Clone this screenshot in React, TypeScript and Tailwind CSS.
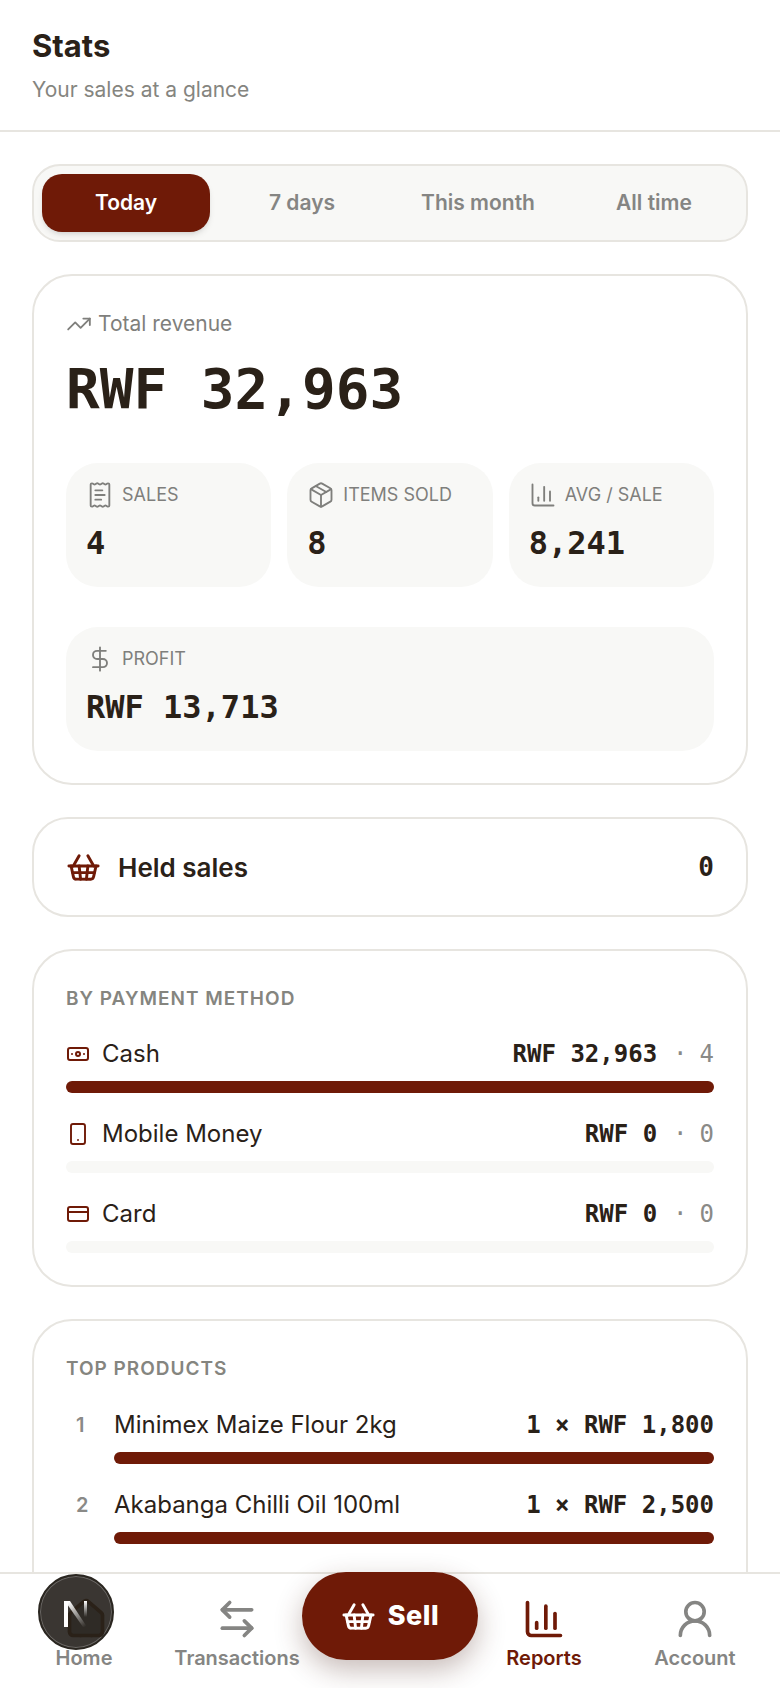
import { TrendingUp, ReceiptText, Package, ChartColumn, DollarSign, ShoppingBasket, Banknote, Smartphone, CreditCard, ArrowLeftRight, UserRound, House } from "lucide-react";
import type { ReactNode } from "react";

const sans = "font-['Inter','Liberation_Sans',sans-serif]";
const mono = "font-['DejaVu_Sans_Mono',monospace]";

function Tile({ icon, label, value, className }: { icon: ReactNode; label: string; value: string; className?: string }) {
  return (
    <div className={`h-[124px] rounded-[32px] bg-[#f8f8f6] pl-5 pt-[18px] ${className ?? ""}`}>
      <div className="flex items-center gap-2 text-[#7f7f7c]">
        <span className="flex h-7 w-7 items-center justify-center">{icon}</span>
        <span className="text-[18px] leading-6">{label}</span>
      </div>
      <div className={`mt-[14px] text-[32px] font-bold leading-10 text-[#2a2118] ${mono}`}>{value}</div>
    </div>
  );
}

function PayRow({ icon, name, amount, count, on }: { icon: ReactNode; name: string; amount: string; count: string; on?: boolean }) {
  return (
    <div>
      <div className="flex h-8 items-center">
        <span className="flex h-6 w-6 items-center justify-center text-[#6f1a07]">{icon}</span>
        <span className="ml-3 text-[24px] text-[#2a2118]">{name}</span>
        <span className={`ml-auto text-[24px] font-bold text-[#2a2118] ${mono}`}>{amount}</span>
        <span className={`ml-4 text-[24px] text-[#8a8a87] ${mono}`}>·</span>
        <span className={`ml-3 text-[24px] text-[#8a8a87] ${mono}`}>{count}</span>
      </div>
      <div className={`mt-[11px] h-3 rounded-full ${on ? "bg-[#6f1a07]" : "bg-[#f8f8f6]"}`} />
    </div>
  );
}

function ProductRow({ rank, name, qty }: { rank: string; name: string; qty: string }) {
  return (
    <div className="flex">
      <span className="w-12 pl-[10px] text-[20px] font-semibold leading-8 text-[#8a8a87]">{rank}</span>
      <div className="flex-1">
        <div className="flex h-8 items-center justify-between">
          <span className="text-[24px] text-[#2a2118]">{name}</span>
          <span className={`text-[24px] font-bold text-[#2a2118] ${mono}`}>{qty}</span>
        </div>
        <div className="mt-[11px] h-3 rounded-full bg-[#6f1a07]" />
      </div>
    </div>
  );
}

function NavItem({ icon, label, active, className }: { icon: ReactNode; label: string; active?: boolean; className?: string }) {
  return (
    <div className={`flex flex-col items-center ${active ? "text-[#6f1a07]" : "text-[#858583]"} ${className ?? ""}`}>
      <span className="flex h-11 items-center justify-center">{icon}</span>
      <span className="mt-[3px] text-[20px] font-semibold leading-7">{label}</span>
    </div>
  );
}

export default function App() {
  return (
    <div className={`flex h-[1688px] w-[780px] flex-col overflow-hidden bg-white ${sans}`}>
      <header className="h-[132px] shrink-0 border-b-2 border-[#e7e5e0] px-8 pt-[26px]">
        <h1 className="text-[31px] font-bold leading-[40px] text-[#2a2118]">Stats</h1>
        <p className="mt-2 text-[21px] leading-[32px] text-[#85857f]">Your sales at a glance</p>
      </header>

      <main className="flex min-h-0 flex-1 flex-col gap-8 overflow-hidden px-8 pt-8">
        <div className="flex h-[78px] shrink-0 items-center gap-2 rounded-[28px] border-2 border-[#e7e5e0] bg-[#f8f8f6] px-2">
          <div className="flex h-[58px] flex-1 items-center justify-center rounded-[20px] bg-[#6f1a07] text-[21px] font-semibold text-white shadow-md">Today</div>
          <div className="flex h-[58px] flex-1 items-center justify-center text-[21px] font-semibold text-[#858583]">7 days</div>
          <div className="flex h-[58px] flex-1 items-center justify-center text-[21px] font-semibold text-[#858583]">This month</div>
          <div className="flex h-[58px] flex-1 items-center justify-center text-[21px] font-semibold text-[#858583]">All time</div>
        </div>

        <section className="h-[511px] shrink-0 rounded-[40px] border-2 border-[#e7e5e0] px-8 pt-[32px]">
          <div className="flex items-center gap-[6px] text-[#7f7f7c]">
            <TrendingUp size={26} strokeWidth={1.7} />
            <span className="text-[21px] leading-8">Total revenue</span>
          </div>
          <div className={`mt-[14px] text-[56px] font-bold leading-[70px] text-[#2a2118] ${mono}`}>RWF 32,963</div>
          <div className="mt-[39px] grid grid-cols-3 gap-4">
            <Tile icon={<ReceiptText size={30} strokeWidth={1.6} />} label="SALES" value="4" />
            <Tile icon={<Package size={30} strokeWidth={1.6} />} label="ITEMS SOLD" value="8" />
            <Tile icon={<ChartColumn size={30} strokeWidth={1.6} />} label="AVG / SALE" value="8,241" />
          </div>
          <Tile className="mt-10" icon={<DollarSign size={30} strokeWidth={1.6} />} label="PROFIT" value="RWF 13,713" />
        </section>

        <section className="flex h-[100px] shrink-0 items-center rounded-[36px] border-2 border-[#e7e5e0] px-8">
          <ShoppingBasket size={35} strokeWidth={2} className="text-[#6f1a07]" />
          <span className="ml-[17px] text-[26px] font-semibold text-[#2a2118]">Held sales</span>
          <span className={`ml-auto text-[26px] font-bold text-[#2a2118] ${mono}`}>0</span>
        </section>

        <section className="h-[338px] shrink-0 rounded-[40px] border-2 border-[#e7e5e0] px-8 pt-[34px]">
          <div className="text-[19px] font-semibold leading-7 tracking-[1px] text-[#85857f]">BY PAYMENT METHOD</div>
          <div className="mt-[25px] flex flex-col gap-[25px]">
            <PayRow on icon={<Banknote size={26} strokeWidth={2} />} name="Cash" amount="RWF 32,963" count="4" />
            <PayRow icon={<Smartphone size={26} strokeWidth={1.9} />} name="Mobile Money" amount="RWF 0" count="0" />
            <PayRow icon={<CreditCard size={26} strokeWidth={2} />} name="Card" amount="RWF 0" count="0" />
          </div>
        </section>

        <section className="shrink-0 rounded-[40px] border-2 border-[#e7e5e0] px-8 pt-[34px] pb-16">
          <div className="text-[19px] font-semibold leading-7 tracking-[1px] text-[#85857f]">TOP PRODUCTS</div>
          <div className="mt-[26px] flex flex-col gap-[25px]">
            <ProductRow rank="1" name="Minimex Maize Flour 2kg" qty="1 × RWF 1,800" />
            <ProductRow rank="2" name="Akabanga Chilli Oil 100ml" qty="1 × RWF 2,500" />
          </div>
        </section>
      </main>

      <nav className="relative z-10 flex h-[116px] shrink-0 items-start border-t-2 border-[#e7e5e0] bg-white pt-[23px]">
        <NavItem className="w-[168px]" icon={<House size={44} strokeWidth={2} />} label="Home" />
        <NavItem className="w-[138px]" icon={<ArrowLeftRight size={44} strokeWidth={2} />} label="Transactions" />
        <div className="w-[163px]" />
        <NavItem className="w-[150px]" active icon={<ChartColumn size={44} strokeWidth={2} />} label="Reports" />
        <NavItem className="w-[152px]" icon={<UserRound size={44} strokeWidth={2} />} label="Account" />

        {/* sell button sits over the bar */}
        <div className="absolute left-[302px] top-[-2px] flex h-[88px] w-[176px] items-center justify-center gap-3 rounded-full bg-[#6f1a07] text-white shadow-[0_10px_28px_rgba(70,30,20,0.3)]">
          <ShoppingBasket size={35} strokeWidth={2} />
          <span className="text-[27px] font-extrabold tracking-[0.6px]">Sell</span>
        </div>

        {/* dev indicator floats over the Home icon */}
        <div className="absolute left-[38px] top-0 flex h-[76px] w-[76px] items-center justify-center rounded-full border-2 border-[#2a2620] bg-[#3a3632] shadow-[0_0_0_1px_rgba(255,255,255,0.25)_inset]">
          <House size={44} strokeWidth={2} className="absolute left-[24px] top-[21px] text-[#2a2118]" fill="#2f2b26" />
          <svg className="relative mt-1" width="26" height="28" viewBox="0 0 26 28" fill="none">
            <path d="M4 1h3l17 26h-4L4 4V1Z" fill="url(#nfade)" />
            <path d="M1 1h4v26H1V1Z" fill="#fff" />
            <path d="M21 1h3v16h-3V1Z" fill="url(#nfade2)" />
            <defs>
              <linearGradient id="nfade" x1="4" y1="3" x2="22" y2="27" gradientUnits="userSpaceOnUse">
                <stop stopColor="#fff" />
                <stop offset="1" stopColor="#fff" stopOpacity="0" />
              </linearGradient>
              <linearGradient id="nfade2" x1="22" y1="1" x2="22" y2="17" gradientUnits="userSpaceOnUse">
                <stop stopColor="#fff" />
                <stop offset="1" stopColor="#fff" stopOpacity="0" />
              </linearGradient>
            </defs>
          </svg>
        </div>
      </nav>
    </div>
  );
}
